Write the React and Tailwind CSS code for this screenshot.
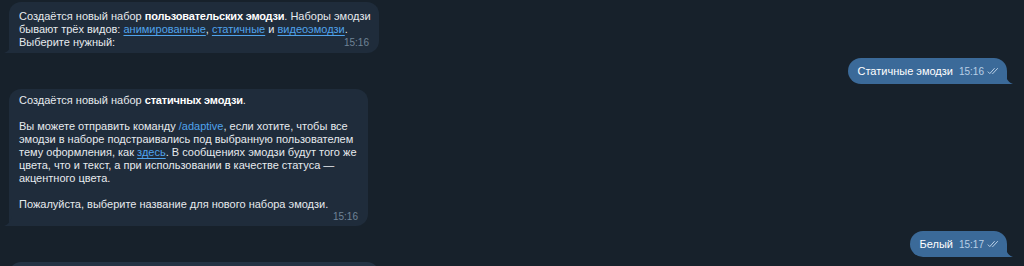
import React from 'react';

const font = { fontFamily: '"Liberation Sans", Arial, sans-serif' };

const TailLeft = ({ color }) => (
  <svg className="absolute -left-[5px] bottom-0" width="8" height="10" viewBox="0 0 8 10">
    <path d="M8 0 V10 H0 C3 9 6 7 8 0 Z" fill={color} />
  </svg>
);

const TailRight = ({ color }) => (
  <svg className="absolute -right-[6px] bottom-0" width="8" height="10" viewBox="0 0 8 10">
    <path d="M0 0 V10 H8 C5 9 2 7 0 0 Z" fill={color} />
  </svg>
);

const Checks = () => (
  <svg width="12" height="8" viewBox="0 0 12 8" className="ml-[3px]">
    <path d="M0.8 4.6 L2.8 6.6 L7.6 1.2" stroke="#b9cfe6" strokeWidth="1" fill="none" />
    <path d="M5.2 6.4 L5.6 6.8 L10.8 1.2" stroke="#b9cfe6" strokeWidth="1" fill="none" />
  </svg>
);

const Link = ({ children }) => (
  <span className="text-[#4fa3ec] underline underline-offset-2">{children}</span>
);

const Bold = ({ children }) => (
  <b className="text-white tracking-[-0.2px]">{children}</b>
);

const Incoming = ({ children, time, className = '', timeClass = 'bottom-[4px]' }) => (
  <div className={`relative self-start ml-[9px] bg-[#1f2c3b] rounded-[12px] rounded-bl-none pl-[10px] pr-[7px] ${className}`}>
    {children}
    <span className="inline-block w-[34px]" />
    <span className={`absolute right-[10px] text-[10px] leading-[12px] text-[#6f8396] ${timeClass}`}>{time}</span>
    <TailLeft color="#1f2c3b" />
  </div>
);

const Outgoing = ({ children, time }) => (
  <div className="relative self-end mr-[17px] bg-[#3b6a99] rounded-[13px] rounded-br-none h-[26px] pl-[10px] pr-[8px] flex items-center">
    <span className="text-[11px] text-white">{children}</span>
    <span className="ml-[6px] text-[10px] text-[#b9cfe6]">{time}</span>
    <Checks />
    <TailRight color="#3b6a99" />
  </div>
);

export default function App() {
  return (
    <div className="h-[266px] w-[1024px] overflow-hidden bg-[#17212b]" style={font}>
      <div className="flex flex-col gap-[5px] pt-[2px] text-[11px] leading-[13px] text-[#e6eaee]">
        <Incoming time="15:16" className="w-[370px] pt-[8px] pb-[4px]">
          Создаётся новый набор <Bold>пользовательских эмодзи</Bold>. Наборы эмодзи бывают трёх видов: <Link>анимированные</Link>, <Link>статичные</Link> и <Link>видеоэмодзи</Link>. Выберите нужный:
        </Incoming>

        <Outgoing time="15:16">Статичные эмодзи</Outgoing>

        <Incoming time="15:16" className="w-[359px] pt-[5px] pb-[2px]" timeClass="bottom-[3px]">
          Создаётся новый набор <Bold>статичных эмодзи</Bold>.
          <br />
          <br />
          Вы можете отправить команду <span className="text-[#4fa3ec]">/adaptive</span>, если хотите, чтобы все эмодзи в наборе подстраивались под выбранную пользователем тему оформления, как <Link>здесь</Link>. В сообщениях эмодзи будут того же цвета, что и текст, а при использовании в качестве статуса — акцентного цвета.
          <br />
          <br />
          Пожалуйста, выберите название для нового набора эмодзи.
        </Incoming>

        <Outgoing time="15:17">Белый</Outgoing>

        <div className="self-start ml-[9px] w-[370px] h-[40px] rounded-[12px] bg-[#243344]" />
      </div>
    </div>
  );
}
